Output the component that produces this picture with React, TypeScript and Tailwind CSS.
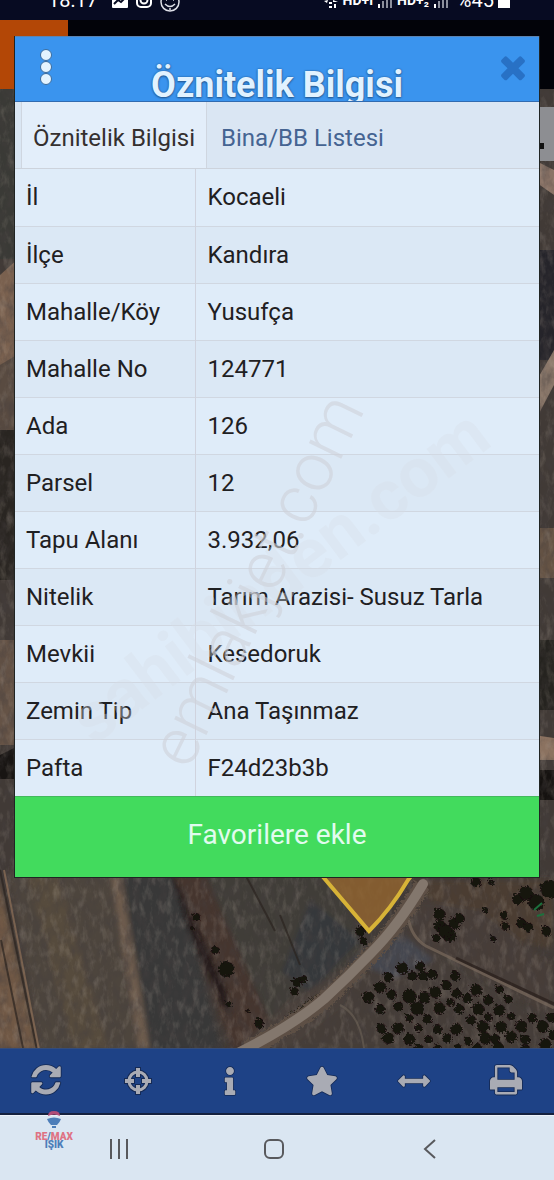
import React from "react";
import { FaInfo, FaStar } from "react-icons/fa";

const rows: [string, string][] = [
  ["İl", "Kocaeli"],
  ["İlçe", "Kandıra"],
  ["Mahalle/Köy", "Yusufça"],
  ["Mahalle No", "124771"],
  ["Ada", "126"],
  ["Parsel", "12"],
  ["Tapu Alanı", "3.932,06"],
  ["Nitelik", "Tarım Arazisi- Susuz Tarla"],
  ["Mevkii", "Kesedoruk"],
  ["Zemin Tip", "Ana Taşınmaz"],
  ["Pafta", "F24d23b3b"],
];

/* x, y, radius of every tree in the orchard */
const trees: [number, number, number][] = [
  [401, 967, 6], [419, 965, 5], [387, 976, 5], [379, 986, 6], [367, 996, 6], [390, 993, 5],
  [411, 975, 5], [422, 975, 5], [431, 973, 5], [454, 975, 5], [445, 984, 5], [408, 995, 7],
  [423, 996, 6], [434, 991, 6], [455, 992, 5], [475, 989, 6], [498, 988, 4], [507, 998, 4],
  [466, 997, 5], [487, 999, 5], [379, 1008, 5], [397, 1005, 5], [416, 1007, 7], [408, 1017, 4],
  [426, 1018, 5], [438, 1007, 6], [458, 1008, 5], [449, 1001, 4], [477, 1008, 6], [498, 1009, 6],
  [510, 1015, 4], [487, 1016, 4], [470, 1019, 5], [380, 1027, 5], [387, 1037, 6], [397, 1027, 6],
  [408, 1038, 6], [417, 1027, 4], [427, 1038, 4], [436, 1028, 5], [446, 1037, 5], [455, 1028, 6],
  [467, 1040, 4], [482, 1026, 6], [484, 1037, 6], [500, 1026, 6], [494, 1038, 5], [520, 1025, 6],
  [531, 1017, 5], [541, 1025, 6], [550, 1016, 5], [510, 1036, 6], [524, 1038, 5], [544, 1043, 6],
  [552, 1034, 5], [418, 1047, 4], [436, 1047, 4], [457, 1047, 4], [476, 1047, 5], [497, 1047, 6],
  [524, 1048, 5], [438, 913, 6], [439, 925, 6], [448, 934, 7], [453, 922, 6], [458, 917, 5],
  [435, 937, 4], [444, 930, 7], [517, 898, 6], [525, 892, 7], [535, 901, 8], [548, 888, 9],
  [503, 914, 4], [504, 925, 4], [520, 922, 5], [527, 926, 5], [545, 930, 5], [492, 938, 3],
  [484, 909, 3], [475, 881, 5], [490, 881, 3], [296, 981, 5], [302, 978, 4], [293, 990, 4],
  [359, 930, 5], [362, 940, 4], [225, 968, 8], [214, 949, 4], [195, 916, 4], [191, 927, 2],
  [228, 1003, 3], [258, 1022, 5], [247, 1010, 2],
];

function SatelliteMap() {
  return (
    <svg className="absolute inset-0 h-full w-full" viewBox="0 89 554 959" preserveAspectRatio="xMidYMax slice" aria-hidden="true">
      <defs>
        <filter id="grain" x="0" y="0" width="100%" height="100%">
          <feTurbulence type="fractalNoise" baseFrequency="0.12 0.07" numOctaves="4" seed="8" />
          <feColorMatrix values="0 0 0 0 0.06  0 0 0 0 0.05  0 0 0 0 0.05  1.9 0 0 0 -0.75" />
        </filter>
        <filter id="glint" x="0" y="0" width="100%" height="100%">
          <feTurbulence type="fractalNoise" baseFrequency="0.15 0.07" numOctaves="4" seed="21" />
          <feColorMatrix values="0 0 0 0 0.62  0 0 0 0 0.54  0 0 0 0 0.45  1.8 0 0 0 -0.85" />
        </filter>
        <filter id="soft"><feGaussianBlur stdDeviation="2.5" /></filter>
        <filter id="rough"><feTurbulence baseFrequency="0.3" numOctaves="2" seed="3" /><feDisplacementMap in="SourceGraphic" scale="5" /></filter>
      </defs>
      <rect y="89" width="554" height="959" fill="#413a36" />
      <path d="M0 89h20v170H0z" fill="#3a3a36" />
      <path d="M0 275l20-18v155l-20 8z" fill="#7a614f" />
      <path d="M0 365l20-12v80H0z" fill="#594b41" />
      <path d="M0 430h20v150H0z" fill="#292521" />
      <path d="M0 640h20v105H0z" fill="#655346" />
      <path d="M0 755l20-10v34H0z" fill="#181513" />
      <path d="M534 160l20 10v25l-20-14z" fill="#8b7467" />
      <path d="M534 250h20v110h-20z" fill="#25242a" />
      <path d="M534 385l20-35v35l-20 38z" fill="#8a7769" />
      <path d="M534 528h20v50h-20z" fill="#655344" />
      <path d="M534 640h20v70h-20z" fill="#25231f" />
      <path d="M534 735l20 3v22h-20z" fill="#8b7260" />
      <path d="M534 770h20v30h-20z" fill="#151210" />
      <g filter="url(#soft)">
        <path d="M-4 870L38 1050H-4z" fill="#705844" />
        <path d="M8 870h110l32 180H40z" fill="#4d453d" />
        <path d="M28 876h30l50 174H74z" fill="#62513f" opacity=".5" />
        <path d="M110 870l10 0 31 180h-12z" fill="#7a6654" opacity=".7" />
        <path d="M122 870h52l48 180h-72z" fill="#393938" />
        <path d="M170 870h32l80 180h-50z" fill="#44362d" />
        <path d="M205 870h130l28 78-90 80z" fill="#403c39" />
        <path d="M310 900l50 40-50 52-28-20z" fill="#34373b" />
        <path d="M170 870l12 22 45 98 4 25-10-10-35-80z" fill="#201a17" opacity=".85" />
        <path d="M410 880h144v70l-100-26z" fill="#4c3c33" />
        <path d="M420 900l60 10 74 55v55L406 935z" fill="#463e38" />
        <path d="M404 932l150 92v24H270z" fill="#453d39" />
        <path d="M350 960l54-24 30 24-40 18z" fill="#444650" />
        <path d="M290 1000l70-40-15 45-55 43h-50z" fill="#48413a" />
      </g>
      <rect y="89" width="554" height="959" filter="url(#grain)" opacity=".55" />
      <rect y="89" width="554" height="959" filter="url(#glint)" opacity=".25" />
      <path d="M0 870L37 1050M1 940l22 108M246 876l29 55M280 915l20 50" fill="none" stroke="#2b241f" strokeWidth="2" opacity=".7" />
      <path d="M4 870L39 1050" fill="none" stroke="#8e7158" strokeWidth="2" opacity=".7" />
      <path d="M250 1046l41-32 37-26 23-22 25-20" fill="none" stroke="#262019" strokeWidth="5" filter="url(#rough)" />
      <path d="M408 918q4 20 18 28l128 62" fill="none" stroke="#796a5d" strokeWidth="3" opacity=".7" />
      <path d="M456 958l98 46" fill="none" stroke="#2a211d" strokeWidth="3" opacity=".8" />
      <path d="M340 1005q20 10 24 43" fill="none" stroke="#6d6256" strokeWidth="2" opacity=".6" />
      <path d="M246 1048q50-26 82-53 24-23 45-45 25-27 48-66" fill="none" stroke="#5d5044" strokeWidth="17" filter="url(#rough)" />
      <path d="M240 1052q52-26 84-53 25-23 47-46 27-27 52-69" fill="none" stroke="#83776d" strokeWidth="10" strokeLinecap="round" />
      <g fill="#18120f" filter="url(#rough)">
        {trees.map(([x, y, r]) => (
          <circle key={`${x}-${y}`} cx={x} cy={y} r={r} />
        ))}
      </g>
      <path d="M318 871l51 60q22-22 39-51l8-10z" fill="#94652f" fillOpacity=".8" stroke="#d7b337" strokeWidth="4" />
      <path d="M534 910l8-7m-5 13l7-2" stroke="#1c713d" strokeWidth="2" />
    </svg>
  );
}

function StatusBar() {
  return (
    <div className="flex h-5 items-end justify-between overflow-hidden bg-[#070b22] pr-11 pb-3 pl-12 text-white">
      <div className="flex h-6 shrink-0 items-end gap-2">
        <span className="-mb-1 w-14 text-xl leading-6">18:17</span>
        <svg className="h-4 w-4" viewBox="0 0 16 16" aria-hidden="true">
          <rect width="16" height="16" rx="1" fill="#fff" />
          <path d="M2 12l4-4 3 2 5-5" fill="none" stroke="#070b22" strokeWidth="2" />
        </svg>
        <svg className="h-4 w-4" viewBox="0 0 16 16" fill="none" stroke="#fff" strokeWidth="2" aria-hidden="true">
          <rect x="1" y="1" width="14" height="14" rx="4" />
          <circle cx="8" cy="8" r="3.5" />
        </svg>
        <svg className="-mb-1 h-5 w-5" viewBox="0 0 20 20" fill="none" stroke="#dfe1e8" strokeWidth="1.5" aria-hidden="true">
          <circle cx="10" cy="10" r="9" />
          <path d="M6 8h1M13 8h1M5 12q5 5 10 0M10 16v2" />
        </svg>
      </div>
      <div className="flex h-6 shrink-0 items-end gap-1 text-sm font-bold">
        <svg className="h-4 w-4" viewBox="0 0 16 16" fill="#fff" aria-hidden="true">
          <path d="M1 9l4-1-1 3zM6 10h3v2H6zM10 8l5 2h-5zM6 14h3v2H6zM11 12h2v4h-2z" />
        </svg>
        <span className="leading-4">HD+ı</span>
        <Signal />
        <span className="leading-4">HD+₂</span>
        <Signal />
        <span className="-mb-1 ml-1 text-xl leading-6 font-normal">%45</span>
        <svg className="h-4 w-3" viewBox="0 0 12 16" aria-hidden="true"><path d="M0 0h12v16H0z" fill="#fff" /></svg>
      </div>
    </div>
  );
}

function Signal() {
  return (
    <svg className="h-4 w-4" viewBox="0 0 16 16" aria-hidden="true">
      <path d="M1 12h2v4H1z" fill="#fff" />
      <path d="M5 9h2v7H5zM9 5h2v11H9zM13 1h2v15h-2z" fill="#8b8f9c" />
    </svg>
  );
}

const glyph = "overflow-visible fill-[#a9abb4] stroke-[#152a55]";

function RefreshIcon() {
  return (
    <svg className={`h-8 w-[30px] ${glyph}`} viewBox="0 0 1536 1664" strokeWidth="90" paintOrder="stroke" aria-hidden="true">
      <path d="M1511 928q0 5-1 7-64 268-268 434.500t-478 166.500q-146 0-282.500-55t-243.500-157l-129 129q-19 19-45 19t-45-19-19-45v-448q0-26 19-45t45-19h448q26 0 45 19t19 45-19 45l-137 137q71 66 161 102t187 36q134 0 250-65t186-179q11-17 53-117 8-23 30-23h192q13 0 22.500 9.500t9.500 22.500zm25-800v448q0 26-19 45t-45 19h-448q-26 0-45-19t-19-45 19-45l138-138q-148-137-349-137-134 0-250 65t-186 179q-11 17-53 117-8 23-30 23h-199q-13 0-22.500-9.500t-9.500-22.500v-7q65-268 270-434.500t480-166.500q146 0 284 55.500t245 156.500l130-129q19-19 45-19t45 19 19 45z" />
    </svg>
  );
}

function TargetIcon() {
  return (
    <svg className="h-7 w-7" viewBox="0 0 28 28" fill="none" aria-hidden="true">
      <circle cx="14" cy="14" r="9" stroke="#152a55" strokeWidth="5" />
      <path d="M14 0v11M14 17v11M0 14h11M17 14h11" stroke="#152a55" strokeWidth="6" />
      <circle cx="14" cy="14" r="9" stroke="#a9abb4" strokeWidth="3" />
      <path d="M14 1v9M14 18v9M1 14h9M18 14h9" stroke="#a9abb4" strokeWidth="4" />
    </svg>
  );
}

function MeasureIcon() {
  return (
    <svg className={`h-8 w-8 ${glyph}`} viewBox="0 0 1792 1792" strokeWidth="90" paintOrder="stroke" aria-hidden="true">
      <path d="M1792 896q0 26-19 45l-256 256q-19 19-45 19t-45-19-19-45v-128h-1024v128q0 26-19 45t-45 19-45-19l-256-256q-19-19-19-45t19-45l256-256q19-19 45-19t45 19 19 45v128h1024v-128q0-26 19-45t45-19 45 19l256 256q19 19 19 45z" />
    </svg>
  );
}

function PrintIcon() {
  return (
    <svg className={`h-8 w-8 ${glyph}`} viewBox="0 0 1664 1664" strokeWidth="90" paintOrder="stroke" aria-hidden="true">
      <path d="M384 1408h896v-256h-896v256zm0-640h896v-384h-160q-40 0-68-28t-28-68v-160h-640v640zm1280 64v416q0 13-9.500 22.500t-22.500 9.500h-224v160q0 40-28 68t-68 28h-960q-40 0-68-28t-28-68v-160h-224q-13 0-22.500-9.500t-9.500-22.500v-416q0-79 56.500-135.500t135.500-56.500h64v-544q0-40 28-68t68-28h672q40 0 88 20t76 48l152 152q28 28 48 76t20 88v256h64q79 0 135.500 56.500t56.500 135.500z" />
    </svg>
  );
}

const tools = [
  { label: "Yenile", icon: <RefreshIcon /> },
  { label: "Konum", icon: <TargetIcon /> },
  { label: "Bilgi", icon: <FaInfo className={`h-7 w-7 ${glyph}`} strokeWidth="28" paintOrder="stroke" /> },
  { label: "Favoriler", icon: <FaStar className={`h-[30px] w-8 ${glyph}`} strokeWidth="28" paintOrder="stroke" /> },
  { label: "Ölçüm", icon: <MeasureIcon /> },
  { label: "Yazdır", icon: <PrintIcon /> },
];

function AttributeDialog() {
  return (
    <section role="dialog" aria-label="Öznitelik Bilgisi" className="absolute inset-x-[14px] top-9 border-x border-b border-[#202423] bg-[#dfecf9]">
      <header className="relative flex h-[66px] items-end justify-center overflow-hidden border-t border-b border-t-[#5b83b0] border-b-[#316bb0] bg-[#3a94ee]">
        <button aria-label="Menü" className="absolute top-2 left-[19px] p-1">
          <svg className="h-9 w-4" viewBox="0 0 16 36" fill="#e4f4ff" stroke="#3a6c9f" strokeWidth="1" aria-hidden="true">
            <circle cx="8" cy="6" r="5.5" />
            <circle cx="8" cy="18" r="5.5" />
            <circle cx="8" cy="30" r="5.5" />
          </svg>
        </button>
        <h1 className="-mb-1 text-4xl leading-10 font-bold text-[#e1f2ff] [text-shadow:0_1px_2px_#24578f,0_0_2px_#24578f]">Öznitelik Bilgisi</h1>
        <button aria-label="Kapat" className="absolute top-3 right-2">
          <svg className="h-9 w-9 fill-[#2871c5]" viewBox="0 0 1792 1792" aria-hidden="true">
            <path d="M1490 1322q0 40-28 68l-136 136q-28 28-68 28t-68-28l-294-294-294 294q-28 28-68 28t-68-28l-136-136q-28-28-28-68t28-68l294-294-294-294q-28-28-28-68t28-68l136-136q28-28 68-28t68 28l294 294 294-294q28-28 68-28t68 28l136 136q28 28 28 68t-28 68l-294 294 294 294q28 28 28 68z" />
          </svg>
        </button>
      </header>
      <div role="tablist" className="flex h-[67px] border-b border-[#cdd3dc] bg-[#dae6f3] pl-1.5 text-2xl">
        <button role="tab" aria-selected="true" className="border-x border-[#cfd6e0] bg-[#e3eefa] px-[11px] pt-1.5 text-[#35302f]">Öznitelik Bilgisi</button>
        <button role="tab" aria-selected="false" className="px-3.5 pt-1.5 text-[#456492]">Bina/BB Listesi</button>
      </div>
      <table className="w-full border-collapse text-2xl text-[#1f2022]">
        <tbody>
          {rows.map(([name, value]) => (
            <tr key={name} className="h-[57px] border-b border-[#d0d7e1] bg-[#dfecf9] last:border-b-0 even:bg-[#dbe8f5]">
              <th scope="row" className="w-[180px] border-r border-[#d0d3de] p-0 pl-[11px] text-left font-normal whitespace-nowrap">{name}</th>
              <td className="p-0 pl-3">{value}</td>
            </tr>
          ))}
        </tbody>
      </table>
      <button className="h-[81px] w-full border-t border-[#43b85c] bg-[#42db5d] pb-1 text-[28px] text-[#e1fbef]">Favorilere ekle</button>
    </section>
  );
}

export default function App() {
  return (
    <div className="relative flex min-h-screen flex-col overflow-hidden bg-black font-['Roboto',sans-serif]">
      <StatusBar />
      <div className="flex h-[69px] bg-[#020309]">
        <div className="w-[68px] bg-[#b34706]" />
      </div>
      <main className="relative flex-1 overflow-hidden">
        <SatelliteMap />
        <div className="absolute top-[18px] right-0 h-[54px] w-4 bg-[#8d8e92] pt-9">
          <div className="mr-2.5 ml-auto h-1.5 w-1.5 bg-[#111]" />
        </div>
      </main>
      <nav aria-label="Harita araçları" className="grid h-[67px] grid-cols-6 border-t border-b-2 border-t-[#354c79] border-b-[#14213f] bg-[#1e4286] pr-0.5">
        {tools.map((tool) => (
          <button key={tool.label} aria-label={tool.label} className="flex items-center justify-center">
            {tool.icon}
          </button>
        ))}
      </nav>
      <nav aria-label="Sistem" className="relative grid h-[65px] grid-cols-3 border-t border-[#eef3fa] bg-[#dae6f2] pt-0.5 pr-[46px] pl-10">
        <button aria-label="Son uygulamalar" className="flex items-center justify-center">
          <svg className="h-5 w-6" viewBox="-3 0 24 20" stroke="#58595d" strokeWidth="2" aria-hidden="true"><path d="M2 0v20M10 0v20M18 0v20" /></svg>
        </button>
        <button aria-label="Ana ekran" className="flex items-center justify-center">
          <svg className="h-5 w-5" viewBox="0 0 20 20" fill="none" stroke="#58595d" strokeWidth="2" aria-hidden="true"><rect x="1" y="1" width="18" height="18" rx="5" /></svg>
        </button>
        <button aria-label="Geri" className="flex items-center justify-center">
          <svg className="h-5 w-5" viewBox="0 0 20 20" fill="none" stroke="#58595d" strokeWidth="2" aria-hidden="true"><path d="M15 1L5 10l10 9" /></svg>
        </button>
        <div className="absolute -top-1.5 left-[33px] flex w-[42px] flex-col items-center text-[10px] leading-2 font-black">
          <svg className="h-[19px] w-4" viewBox="0 0 16 19" aria-hidden="true">
            <path d="M2 6q0-5 6-5t6 5q-6-3-12 0z" fill="#b04c78" />
            <path d="M2 7q6-3 12 0l1 1q-7-3-14 0z" fill="#dce5f2" />
            <path d="M1 9q7-3 14 0-1 3-4 6H5Q2 12 1 9z" fill="#4d7eb9" />
            <path d="M6 16h4v2H6z" fill="#4d7eb9" />
          </svg>
          <span className="mt-1 text-[#df7284]">RE<span className="text-[#4d7eb9]">/</span>MAX</span>
          <span className="text-[#4d7eb9]">IŞIK</span>
        </div>
      </nav>
      <AttributeDialog />
      <div aria-hidden="true" className="pointer-events-none absolute top-[576px] left-[280px] flex h-0 w-0 items-center justify-center">
        <span className="-rotate-[37deg] text-[70px] font-bold whitespace-nowrap text-[#d8dfe8] opacity-35">sahibinden.com</span>
      </div>
      <div aria-hidden="true" className="pointer-events-none absolute top-[580px] left-[256px] flex h-0 w-0 items-center justify-center">
        <span className="-rotate-[64deg] text-[68px] font-light whitespace-nowrap text-[#cfd2da] opacity-60">emlakjet.com</span>
      </div>
    </div>
  );
}
